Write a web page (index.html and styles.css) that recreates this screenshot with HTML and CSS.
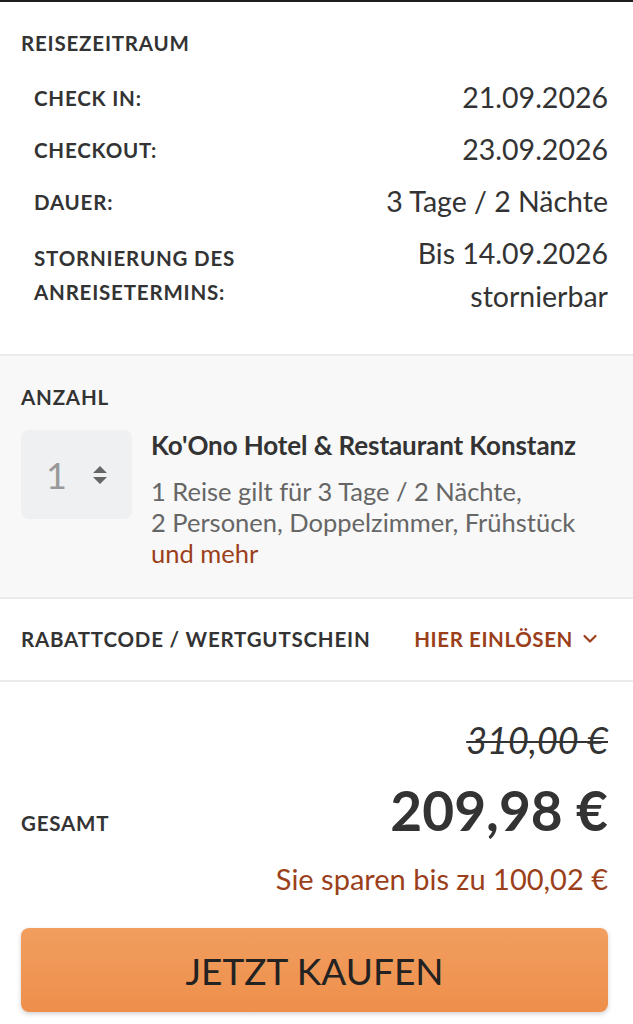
FILE: index.html
```html
<!DOCTYPE html>
<html lang="de">
<head>
<meta charset="utf-8">
<title>Buchung</title>
<link rel="stylesheet" href="styles.css">
</head>
<body>
<div class="page">
  <section class="sec sec-dates">
    <h2 class="label heading">REISEZEITRAUM</h2>
    <div class="rows">
      <div class="row"><div class="label">CHECK IN:</div><div class="value">21.09.2026</div></div>
      <div class="row"><div class="label">CHECKOUT:</div><div class="value">23.09.2026</div></div>
      <div class="row"><div class="label">DAUER:</div><div class="value">3 Tage / 2 Nächte</div></div>
      <div class="row"><div class="label">STORNIERUNG DES<br>ANREISETERMINS:</div><div class="value">Bis 14.09.2026<br>stornierbar</div></div>
    </div>
  </section>
  <section class="sec sec-qty">
    <h2 class="label heading">ANZAHL</h2>
    <div class="item">
      <div class="stepper">
        <span class="num">1</span>
        <svg class="arrows" width="16" height="22" viewBox="0 0 16 22"><path d="M8 2 L15 9 H1 Z M1 13 H15 L8 20 Z" fill="#666"/></svg>
      </div>
      <div class="info">
        <div class="title">Ko'Ono Hotel &amp; Restaurant Konstanz</div>
        <div class="desc">1 Reise gilt für 3 Tage / 2 Nächte,<br>2 Personen, Doppelzimmer, Frühstück<br><span class="more">und mehr</span></div>
      </div>
    </div>
  </section>
  <section class="sec sec-code">
    <div class="label">RABATTCODE / WERTGUTSCHEIN</div>
    <div class="redeem">HIER EINLÖSEN
      <svg class="chev" width="16" height="12" viewBox="0 0 16 12"><path d="M2.5 3 L8 8.5 L13.5 3" fill="none" stroke="#9b3f1b" stroke-width="2.2" stroke-linecap="round" stroke-linejoin="round"/></svg>
    </div>
  </section>
  <section class="sec sec-price">
    <div class="old">310,00 €</div>
    <div class="total">
      <div class="label">GESAMT</div>
      <div class="big">209,98 €</div>
    </div>
    <div class="save">Sie sparen bis zu 100,02 €</div>
    <button class="buy">JETZT KAUFEN</button>
  </section>
</div>
</body>
</html>
```

FILE: styles.css
```css
* { box-sizing: border-box; }
html, body { margin: 0; padding: 0; background: #fff; }
body {
  font-family: Lato, "Noto Sans", sans-serif;
  color: #333;
  border-top: 2px solid #1e1e1e;
}
.page { width: 633px; }
.sec { padding-left: 21px; padding-right: 25px; }
.label {
  font-size: 20.5px;
  font-weight: 700;
  line-height: 34px;
  letter-spacing: 0.8px;
  color: #333;
  margin: 0;
  text-transform: uppercase;
  white-space: nowrap;
}
.heading { margin: 0 0 16px; }
.sec-dates { padding-top: 24px; padding-bottom: 36px; border-bottom: 2px solid #ebebeb; }
.rows { display: flex; flex-direction: column; gap: 9px; padding-left: 13px; }
.row { display: flex; justify-content: space-between; align-items: center; }
.value { font-size: 28.5px; line-height: 43px; text-align: right; color: #333; }

.sec-qty { background: #f8f8f8; padding-top: 24px; padding-bottom: 28px; border-bottom: 2px solid #ebebeb; }
.item { display: flex; gap: 19px; align-items: flex-start; }
.stepper {
  width: 111px; height: 89px; flex: none;
  background: #eef0f2; border-radius: 8px;
  display: flex; align-items: center; justify-content: space-between;
  padding: 0 24px 0 25px;
}
.num { font-size: 36px; color: #999; line-height: 1; }
.title { font-size: 26px; font-weight: 700; line-height: 31px; color: #333; white-space: nowrap; letter-spacing: -0.1px; }
.desc { margin-top: 15px; font-size: 25.5px; line-height: 31px; color: #666; white-space: nowrap; }
.more { color: #9b3f1b; }

.sec-code {
  display: flex; justify-content: space-between; align-items: center;
  padding-top: 23px; padding-bottom: 24px; border-bottom: 2px solid #ebebeb;
}
.redeem { display: flex; align-items: center; gap: 9px; font-size: 20.5px; font-weight: 700; letter-spacing: 0.6px; line-height: 34px; color: #9b3f1b; padding-right: 10px; }

.sec-price { padding-top: 38px; padding-bottom: 12px; display: flex; flex-direction: column; }
.old { text-align: right; font-size: 36px; line-height: 40px; font-style: italic; text-decoration: line-through; text-decoration-thickness: 2px; color: #333; }
.total { display: flex; justify-content: space-between; align-items: baseline; margin-top: 19px; }
.big { font-size: 55px; font-weight: 700; line-height: 62px; color: #333; }
.save { text-align: right; font-size: 29px; line-height: 36px; color: #9b3f1b; margin-top: 20px; }
.buy {
  margin-top: 31px; height: 84px; width: 100%;
  border: none; border-radius: 8px;
  background: linear-gradient(#f19e5f, #ee8f4b);
  box-shadow: 0 2px 5px rgba(0,0,0,0.18);
  font-family: Lato, "Noto Sans", sans-serif;
  font-size: 37px; color: #222;
}
```
